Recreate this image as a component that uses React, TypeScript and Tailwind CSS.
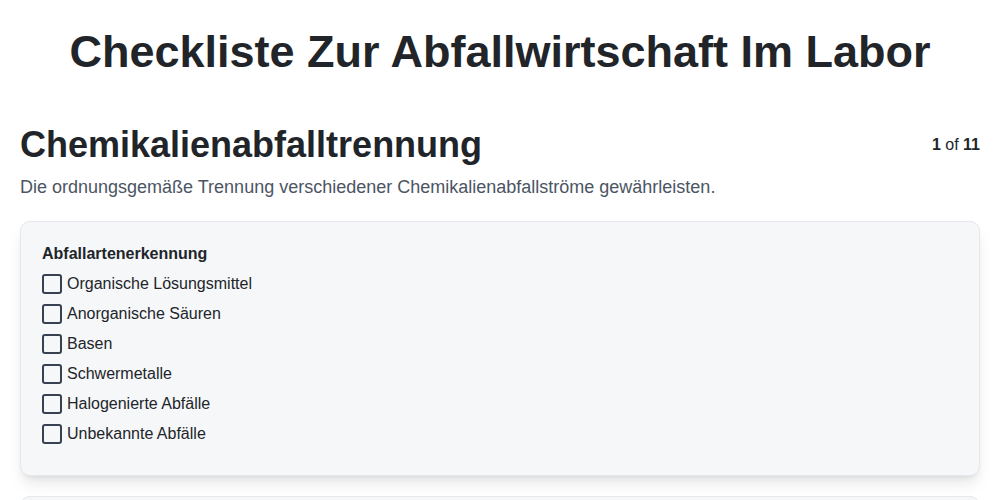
const items = [
  "Organische Lösungsmittel",
  "Anorganische Säuren",
  "Basen",
  "Schwermetalle",
  "Halogenierte Abfälle",
  "Unbekannte Abfälle",
]

export default function App() {
  return (
    <div className="min-h-screen bg-white text-[#212529] font-['Liberation_Sans',Arial,sans-serif]">
      <h1 className="text-center text-[45px] font-bold leading-none pt-[29px] pb-12">
        Checkliste Zur Abfallwirtschaft Im Labor
      </h1>

      <div className="px-5">
        <div className="flex items-start justify-between">
          <h2 className="text-4xl font-bold leading-[45px]">Chemikalienabfalltrennung</h2>
          <div className="text-base pt-[11px]">
            <span className="font-bold">1</span> of <span className="font-bold">11</span>
          </div>
        </div>
        <p className="text-lg text-[#4b5563] mt-[6px]">
          Die ordnungsgemäße Trennung verschiedener Chemikalienabfallströme gewährleisten.
        </p>

        <div className="mt-5 rounded-[10px] border border-gray-200 bg-[#f6f7f9] shadow-lg px-[21px] pt-5 pb-[31px]">
          <h3 className="text-base font-bold mb-2">Abfallartenerkennung</h3>
          <div className="flex flex-col gap-[10px]">
            {items.map((label) => (
              <label key={label} className="flex items-center gap-[5px] text-base leading-5">
                <span className="w-5 h-5 rounded-[3px] border-2 border-[#374151]" />
                {label}
              </label>
            ))}
          </div>
        </div>

        <div className="mt-5 h-10 rounded-[10px] border border-gray-200 bg-[#f6f7f9] shadow-lg" />
      </div>
    </div>
  )
}
